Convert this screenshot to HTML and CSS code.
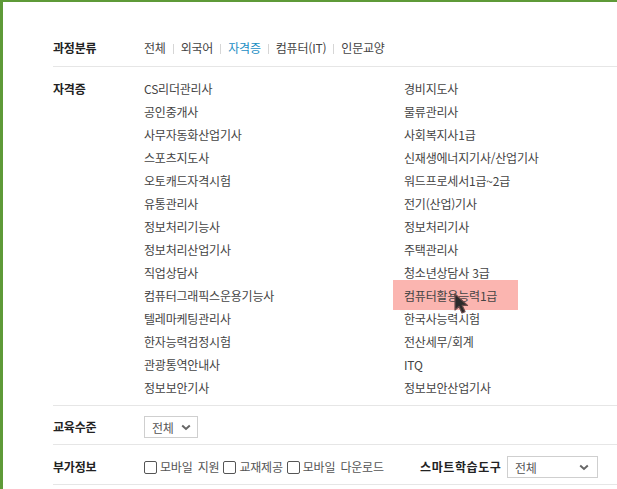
FILE: index.html
```html
<!DOCTYPE html>
<html lang="ko">
<head>
    <meta charset="UTF-8">
    <title>과정검색</title>
    <link rel="stylesheet" href="styles.css">
</head>
<body>
    <div class="search-box">
        <div class="filter-row row-category">
            <div class="filter-label">과정분류</div>
            <ul class="tab-list">
                <li><a href="#">전체</a></li>
                <li><a href="#">외국어</a></li>
                <li><a href="#" class="active">자격증</a></li>
                <li><a href="#">컴퓨터(IT)</a></li>
                <li><a href="#">인문교양</a></li>
            </ul>
        </div>

        <div class="filter-row row-cert">
            <div class="filter-label">자격증</div>
            <ul class="cert-list">
                <li>CS리더관리사</li>
                <li>경비지도사</li>
                <li>공인중개사</li>
                <li>물류관리사</li>
                <li>사무자동화산업기사</li>
                <li>사회복지사1급</li>
                <li>스포츠지도사</li>
                <li>신재생에너지기사/산업기사</li>
                <li>오토캐드자격시험</li>
                <li>워드프로세서1급~2급</li>
                <li>유통관리사</li>
                <li>전기(산업)기사</li>
                <li>정보처리기능사</li>
                <li>정보처리기사</li>
                <li>정보처리산업기사</li>
                <li>주택관리사</li>
                <li>직업상담사</li>
                <li>청소년상담사 3급</li>
                <li>컴퓨터그래픽스운용기능사</li>
                <li class="hover"><span>컴퓨터활용능력1급</span>
                    <svg class="cursor" width="20" height="22" viewBox="0 0 20 22">
                        <path d="M2 1 L2 17 L6 13.5 L9 20 L12 18.6 L9.2 12.4 L14.5 12.4 Z" fill="#2b2b2b" stroke="#6b4a4a" stroke-width="1.2" stroke-linejoin="round"/>
                    </svg>
                </li>
                <li>텔레마케팅관리사</li>
                <li>한국사능력시험</li>
                <li>한자능력검정시험</li>
                <li>전산세무/회계</li>
                <li>관광통역안내사</li>
                <li>ITQ</li>
                <li>정보보안기사</li>
                <li>정보보안산업기사</li>
            </ul>
        </div>

        <div class="filter-row row-level">
            <div class="filter-label">교육수준</div>
            <div class="select-box select-small">
                <span>전체</span>
                <svg width="10" height="7" viewBox="0 0 10 7"><path d="M1.2 1.5 L5 5 L8.8 1.5" fill="none" stroke="#666" stroke-width="2"/></svg>
            </div>
        </div>

        <div class="filter-row row-extra">
            <div class="filter-label">부가정보</div>
            <div class="check-list">
                <label class="check"><span class="check-box"></span>모바일 지원</label>
                <label class="check"><span class="check-box"></span>교재제공</label>
                <label class="check"><span class="check-box"></span>모바일 다운로드</label>
            </div>
            <div class="tool-label">스마트학습도구</div>
            <div class="select-box select-wide">
                <span>전체</span>
                <svg width="10" height="7" viewBox="0 0 10 7"><path d="M1.2 1.5 L5 5 L8.8 1.5" fill="none" stroke="#666" stroke-width="2"/></svg>
            </div>
        </div>
    </div>
</body>
</html>
```

FILE: styles.css
```css
:root {
    --green-color: #5e9a38;
    --line-color: #e6e6e6;
    --text-color: #444;
    --label-color: #222;
    --active-color: #1a8ec4;
}

body {
    margin: 0;
    font-family: "Noto Sans CJK KR", "Liberation Sans", sans-serif;
    font-size: 12px;
    letter-spacing: -0.2px;
    color: var(--text-color);
    background-color: #fff;
}

.search-box {
    height: 487px;
    border-top: 2px solid var(--green-color);
    border-left: 3px solid var(--green-color);
    padding-left: 50px;
    overflow: hidden;
}

.filter-row {
    display: flex;
    align-items: flex-start;
    border-bottom: 1px solid var(--line-color);
}

.filter-label {
    width: 91px;
    flex-shrink: 0;
    font-weight: bold;
    color: var(--label-color);
    line-height: 18px;
}

/* 과정분류 */
.row-category {
    padding: 37px 0 9px;
}

.tab-list {
    list-style: none;
    margin: 0;
    padding: 0;
    display: flex;
    line-height: 18px;
}

.tab-list li + li::before {
    content: "";
    display: inline-block;
    width: 1px;
    height: 10px;
    margin: 0 7px;
    background-color: #d6d6d6;
    vertical-align: -1px;
}

.tab-list a {
    color: var(--text-color);
    text-decoration: none;
}

.tab-list a.active {
    color: var(--active-color);
}

/* 자격증 */
.row-cert {
    padding: 10px 0 6px;
}

.row-cert .filter-label {
    line-height: 23px;
}

.cert-list {
    list-style: none;
    margin: 0;
    padding: 0;
    display: grid;
    grid-template-columns: 260px 200px;
}

.cert-list li {
    line-height: 23px;
    white-space: nowrap;
}

.cert-list li.hover {
    position: relative;
    margin: -4px 0 -3px -11px;
    padding: 4px 0 3px 11px;
    width: 114px;
    background-color: #fbb5b0;
}

.cursor {
    position: absolute;
    left: 60px;
    top: 13px;
}

/* 교육수준 / 부가정보 */
.row-level {
    padding: 10px 0 6px;
}

.row-extra {
    padding: 11px 0 6px;
}

.row-level .filter-label,
.row-extra .filter-label {
    line-height: 22px;
}

.select-box {
    box-sizing: border-box;
    height: 22px;
    border: 1px solid #cfcfcf;
    display: flex;
    align-items: center;
    justify-content: space-between;
    padding: 0 6px 0 7px;
    color: #555;
    background-color: #fff;
}

.select-small {
    width: 54px;
}

.select-wide {
    width: 91px;
    padding-right: 8px;
}

.check-list {
    display: flex;
    line-height: 22px;
    width: 276px;
}

.check {
    display: flex;
    align-items: center;
    margin-right: 4px;
    color: #555;
    word-spacing: 2px;
}

.check-box {
    box-sizing: border-box;
    width: 13px;
    height: 13px;
    border: 1px solid #555;
    border-radius: 2px;
    margin-right: 3px;
}

.tool-label {
    font-weight: bold;
    color: var(--label-color);
    line-height: 22px;
    width: 87px;
    letter-spacing: 0.6px;
}
```
